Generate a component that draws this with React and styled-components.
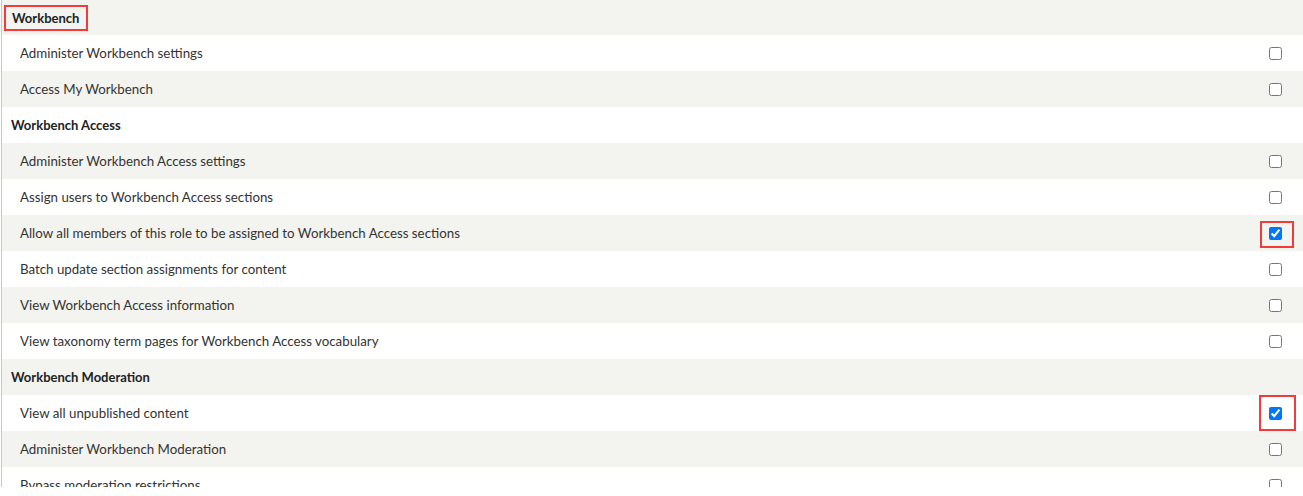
import React from "react";
import styled, { createGlobalStyle } from "styled-components";

const Global = createGlobalStyle`
  html, body { margin: 0; padding: 0; background: #fff; }
  body { font-family: Lato, "Open Sans", sans-serif; }
`;

const Frame = styled.div`
  margin-left: 1px;
  border-left: 1px solid #c8c8c8;
  height: 487px;
  overflow: hidden;
`;

const Row = styled.div`
  display: flex;
  align-items: center;
  height: ${(p) => (p.$first ? 35 : 36)}px;
  background: ${(p) => (p.$odd ? "#f3f3ef" : "#ffffff")};
  padding-right: 19px;
`;

const ModuleName = styled.div`
  flex: 1;
  padding-left: 9px;
  font-size: 13px;
  font-weight: 700;
  color: #222;
`;

const Highlight = styled.span`
  display: inline-block;
  padding: 3px 7px 3px 6px;
  margin-left: -7px;
  border: 2px solid #f23b3b;
`;

const PermName = styled.div`
  flex: 1;
  padding-left: 18px;
  font-size: 13.3px;
  color: #333;
`;

const CheckCell = styled.div`
  position: relative;
  display: flex;
  align-items: center;
  justify-content: center;
  width: 17px;
  height: 17px;
`;

const Box = styled.input`
  margin: 0;
  width: 13px;
  height: 13px;
`;

const Outline = styled.span`
  position: absolute;
  left: ${(p) => p.$x}px;
  top: ${(p) => p.$y}px;
  width: ${(p) => p.$w}px;
  height: ${(p) => p.$h}px;
  box-sizing: border-box;
  border: 2px solid #f23b3b;
  pointer-events: none;
`;

const rows = [
  { type: "module", label: "Workbench", highlight: true },
  { label: "Administer Workbench settings" },
  { label: "Access My Workbench" },
  { type: "module", label: "Workbench Access" },
  { label: "Administer Workbench Access settings" },
  { label: "Assign users to Workbench Access sections" },
  {
    label: "Allow all members of this role to be assigned to Workbench Access sections",
    checked: true,
    outline: { x: -7, y: -4, w: 34, h: 27 },
  },
  { label: "Batch update section assignments for content" },
  { label: "View Workbench Access information" },
  { label: "View taxonomy term pages for Workbench Access vocabulary" },
  { type: "module", label: "Workbench Moderation" },
  {
    label: "View all unpublished content",
    checked: true,
    outline: { x: -8, y: -10, w: 37, h: 36 },
  },
  { label: "Administer Workbench Moderation" },
  { label: "Bypass moderation restrictions" },
];

export default function App() {
  return (
    <>
      <Global />
      <Frame>
        {rows.map((r, i) => (
          <Row key={i} $odd={i % 2 === 0} $first={i === 0}>
            {r.type === "module" ? (
              <ModuleName>
                {r.highlight ? <Highlight>{r.label}</Highlight> : r.label}
              </ModuleName>
            ) : (
              <>
                <PermName>{r.label}</PermName>
                <CheckCell>
                  <Box type="checkbox" checked={!!r.checked} readOnly />
                  {r.outline && (
                    <Outline
                      $x={r.outline.x}
                      $y={r.outline.y}
                      $w={r.outline.w}
                      $h={r.outline.h}
                    />
                  )}
                </CheckCell>
              </>
            )}
          </Row>
        ))}
      </Frame>
    </>
  );
}
